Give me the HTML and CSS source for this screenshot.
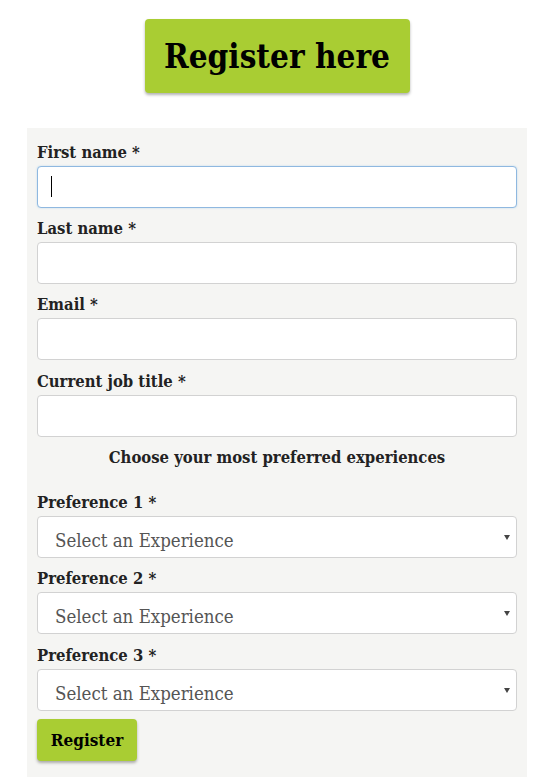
FILE: index.html
```html
<!DOCTYPE html>
<html>
<head>
<meta charset="utf-8">
<link rel="stylesheet" href="styles.css">
</head>
<body>
<div class="page">
  <div class="hero"><span class="hero-btn">Register here</span></div>
  <form class="form">
    <div class="field">
      <label class="label">First name *</label>
      <div class="input-wrap"><input class="input focused" type="text"><span class="caret"></span></div>
    </div>
    <div class="field">
      <label class="label">Last name *</label>
      <input class="input" type="text">
    </div>
    <div class="field">
      <label class="label">Email *</label>
      <input class="input" type="text">
    </div>
    <div class="field field-wide">
      <label class="label">Current job title *</label>
      <input class="input" type="text">
    </div>
    <div class="section-title">Choose your most preferred experiences</div>
    <div class="field">
      <label class="label">Preference 1 *</label>
      <div class="select-wrap"><select class="select"><option>Select an Experience</option></select></div>
    </div>
    <div class="field">
      <label class="label">Preference 2 *</label>
      <div class="select-wrap"><select class="select"><option>Select an Experience</option></select></div>
    </div>
    <div class="field field-wide">
      <label class="label">Preference 3 *</label>
      <div class="select-wrap"><select class="select"><option>Select an Experience</option></select></div>
    </div>
    <div class="actions"><button type="button" class="submit">Register</button></div>
  </form>
</div>
</body>
</html>
```
FILE: styles.css
```css
* { box-sizing: border-box; }
html, body { margin: 0; padding: 0; background: #fff; }
body { font-family: "DejaVu Serif Condensed", "DejaVu Serif", serif; color: #222; padding-right: 1px; }
.page { width: 500px; margin: 0 auto; padding-top: 19px; }
.hero { display: flex; justify-content: center; margin-bottom: 35px; }
.hero-btn {
  display: inline-flex; align-items: center; justify-content: center;
  width: 265px; height: 74px;
  background: #a9cd33; color: #000;
  font-size: 33px; font-weight: bold;
  border-radius: 4px;
  box-shadow: 0 2px 3px rgba(0,0,0,0.3);
}
.form { background: #f5f5f3; padding: 10px 10px 30px; }
.field { display: flex; flex-direction: column; }
.label { font-size: 16.5px; font-weight: bold; color: #222; height: 28px; line-height: 30px; margin-bottom: 0; }
.field + .field { margin-top: 6px; }
.field + .field.field-wide { margin-top: 7px; }
.input, .select {
  width: 480px; height: 42px;
  border: 1px solid #d2d2d2; border-radius: 4px;
  background: #fff; font-family: inherit; font-size: 17px;
  outline: none;
}
.input { padding: 0 13px; }
.input.focused { border-color: #8fb8e0; box-shadow: 0 0 2px rgba(102,175,233,0.4); }
.input-wrap { position: relative; }
.caret { position: absolute; left: 14px; top: 10px; width: 1px; height: 21px; background: #000; }
.section-title { text-align: center; font-size: 16.5px; font-weight: bold; color: #222; height: 42px; line-height: 42px; margin-top: 0; margin-bottom: 9px; }
.select-wrap { position: relative; }
.select {
  appearance: none; -webkit-appearance: none;
  padding: 6px 17px 0; color: #555; font-weight: 300; font-size: 18.5px;
}
.select-wrap::after {
  content: ""; position: absolute; right: 7px; top: 19px;
  border-left: 3px solid transparent; border-right: 3px solid transparent; border-top: 5px solid #444;
}
.actions { margin-top: 8px; }
.submit {
  width: 100px; height: 42px; border: 0; border-radius: 4px;
  background: #a9cd33; color: #000;
  font-family: inherit; font-size: 17px; font-weight: bold;
  box-shadow: 0 2px 3px rgba(0,0,0,0.3);
}
```
